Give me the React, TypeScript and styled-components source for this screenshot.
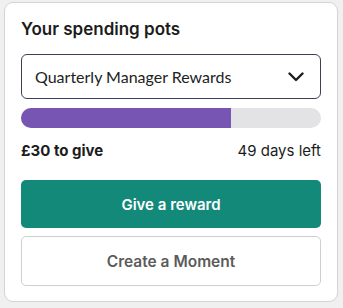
import React from "react";
import styled, { createGlobalStyle } from "styled-components";

const Global = createGlobalStyle`
  html, body { margin: 0; padding: 0; background: #f0f0f0; }
  body { font-family: Inter, "Noto Sans", "Liberation Sans", sans-serif; color: #1c1c1c; }
  * { box-sizing: border-box; }
`;

const Page = styled.div`
  padding: 2px 6px 6px 4px;
`;

const Card = styled.section`
  width: 334px;
  background: #ffffff;
  border: 1px solid #d4d4d4;
  border-radius: 9px;
  padding: 15px 16px 15px 16px;
  display: flex;
  flex-direction: column;
`;

const Title = styled.h2`
  margin: 0;
  font-size: 17px;
  line-height: 22px;
  font-weight: 600;
  color: #1c1c1c;
`;

const Select = styled.button`
  margin-top: 14px;
  height: 45px;
  width: 100%;
  display: flex;
  align-items: center;
  justify-content: space-between;
  padding: 0 16px 0 13px;
  background: #fff;
  border: 1px solid #3b4053;
  border-radius: 6px;
  font-family: Lato, Inter, sans-serif;
  font-size: 16px;
  color: #222;
  cursor: pointer;
`;

const Track = styled.div`
  margin-top: 9px;
  height: 20px;
  border-radius: 10px;
  background: #e3e3e6;
  overflow: hidden;
`;

const Fill = styled.div`
  height: 100%;
  background: #7755b2;
`;

const InfoRow = styled.div`
  margin-top: 13px;
  display: flex;
  justify-content: space-between;
  align-items: baseline;
  font-size: 15px;
  line-height: 20px;
`;

const Amount = styled.span`
  font-weight: 700;
`;

const Days = styled.span`
  font-weight: 400;
`;

const Button = styled.button<{ $primary?: boolean }>`
  width: 100%;
  height: ${(p) => (p.$primary ? "48px" : "50px")};
  margin-top: ${(p) => (p.$primary ? "19px" : "8px")};
  border-radius: 5px;
  font-family: inherit;
  font-size: ${(p) => (p.$primary ? "15px" : "15.5px")};
  font-weight: 600;
  cursor: pointer;
  background: ${(p) => (p.$primary ? "#138979" : "#ffffff")};
  color: ${(p) => (p.$primary ? "#ffffff" : "#5b5b5b")};
  border: ${(p) => (p.$primary ? "none" : "1px solid #cfcfcf")};
`;

const Chevron = () => (
  <svg width="16" height="10" viewBox="0 0 16 10" fill="none">
    <path d="M1.5 1.5 L8 8 L14.5 1.5" stroke="#1c1c1c" strokeWidth="2.4" strokeLinecap="round" strokeLinejoin="round" />
  </svg>
);

export default function App() {
  const progress = 70;
  return (
    <>
      <Global />
      <Page>
        <Card>
          <Title>Your spending pots</Title>
          <Select>
            <span>Quarterly Manager Rewards</span>
            <Chevron />
          </Select>
          <Track>
            <Fill style={{ width: `${progress}%` }} />
          </Track>
          <InfoRow>
            <Amount>£30 to give</Amount>
            <Days>49 days left</Days>
          </InfoRow>
          <Button $primary>Give a reward</Button>
          <Button>Create a Moment</Button>
        </Card>
      </Page>
    </>
  );
}
